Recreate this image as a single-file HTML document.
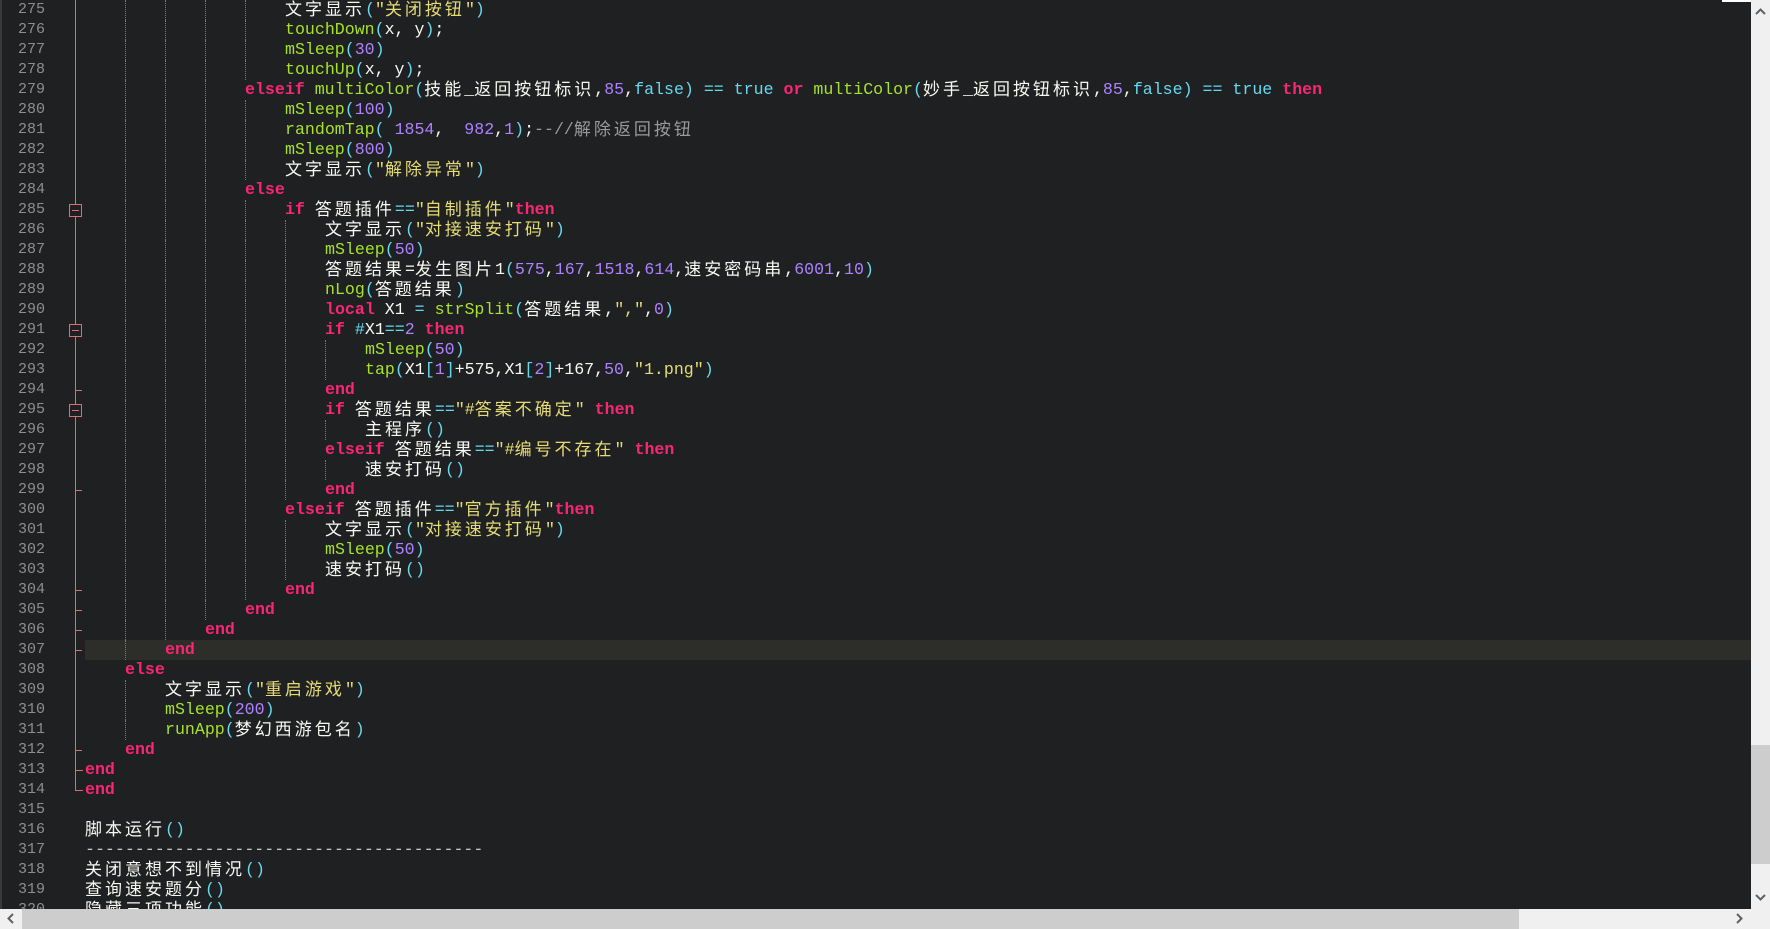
<!DOCTYPE html>
<html><head><meta charset="utf-8"><style>
*{margin:0;padding:0;box-sizing:border-box}
body{width:1770px;height:929px;overflow:hidden;background:#1f2022;position:relative;font-family:"Liberation Mono",monospace;}
#ed{position:absolute;left:0;top:0;width:1751px;height:909px;overflow:hidden;background:#1f2022;border-left:2px solid #3a3a3a}
.ln{position:absolute;left:0;width:43px;text-align:right;color:#8e8e8e;font-size:15px;line-height:20px;height:20px}
.l{position:absolute;left:83px;height:20px;line-height:20px;font-size:16.6px;color:#f8f8f2;white-space:pre;overflow:visible}
.l span{vertical-align:top;line-height:20px}
.i{display:inline-block;width:40px;height:20px;vertical-align:top}
.g{border-left:1px dotted #7a7a7a}
.l .c{font-family:"Noto Sans CJK SC",sans-serif;font-size:17px;letter-spacing:3px;display:inline-block;height:20px;line-height:20px;vertical-align:top;position:relative;top:-2px}
.l .s .c{top:-2px}
.k{color:#f92672;font-weight:bold}
.f{color:#a6e22e}
.n{color:#ae81ff}
.s{color:#e6db74}
.p{color:#66d9ef}
.m{color:#9a9a9a}
.d{color:#c8c8c8}
#hl{position:absolute;left:83px;top:640px;width:1668px;height:20px;background:#2d2e29}
.fl{position:absolute;background:#d87070}
.box{position:absolute;left:67px;width:13px;height:13px;border:1px solid #d87070;background:#1f2022}
.box:after{content:"";position:absolute;left:2px;right:2px;top:5px;height:1px;background:#d87070}
</style></head><body>
<div id="ed">
<div id="hl"></div>
<div class="fl" style="left:73px;top:0;width:1px;height:791px"></div>
<div class="fl" style="left:73px;top:790px;width:8px;height:1px"></div>
<div class="fl" style="left:73px;top:770px;width:8px;height:1px"></div>
<div class="fl" style="left:73px;top:390px;width:7px;height:1px"></div>
<div class="fl" style="left:73px;top:490px;width:7px;height:1px"></div>
<div class="fl" style="left:73px;top:590px;width:7px;height:1px"></div>
<div class="fl" style="left:73px;top:610px;width:7px;height:1px"></div>
<div class="fl" style="left:73px;top:630px;width:7px;height:1px"></div>
<div class="fl" style="left:73px;top:650px;width:7px;height:1px"></div>
<div class="fl" style="left:73px;top:750px;width:7px;height:1px"></div>
<div class="box" style="top:204px"></div>
<div class="box" style="top:324px"></div>
<div class="box" style="top:404px"></div>

<div class="ln" style="top:0">275</div><div class="ln" style="top:20px">276</div><div class="ln" style="top:40px">277</div><div class="ln" style="top:60px">278</div><div class="ln" style="top:80px">279</div><div class="ln" style="top:100px">280</div><div class="ln" style="top:120px">281</div><div class="ln" style="top:140px">282</div><div class="ln" style="top:160px">283</div><div class="ln" style="top:180px">284</div><div class="ln" style="top:200px">285</div><div class="ln" style="top:220px">286</div><div class="ln" style="top:240px">287</div><div class="ln" style="top:260px">288</div><div class="ln" style="top:280px">289</div><div class="ln" style="top:300px">290</div><div class="ln" style="top:320px">291</div><div class="ln" style="top:340px">292</div><div class="ln" style="top:360px">293</div><div class="ln" style="top:380px">294</div><div class="ln" style="top:400px">295</div><div class="ln" style="top:420px">296</div><div class="ln" style="top:440px">297</div><div class="ln" style="top:460px">298</div><div class="ln" style="top:480px">299</div><div class="ln" style="top:500px">300</div><div class="ln" style="top:520px">301</div><div class="ln" style="top:540px">302</div><div class="ln" style="top:560px">303</div><div class="ln" style="top:580px">304</div><div class="ln" style="top:600px">305</div><div class="ln" style="top:620px">306</div><div class="ln" style="top:640px">307</div><div class="ln" style="top:660px">308</div><div class="ln" style="top:680px">309</div><div class="ln" style="top:700px">310</div><div class="ln" style="top:720px">311</div><div class="ln" style="top:740px">312</div><div class="ln" style="top:760px">313</div><div class="ln" style="top:780px">314</div><div class="ln" style="top:800px">315</div><div class="ln" style="top:820px">316</div><div class="ln" style="top:840px">317</div><div class="ln" style="top:860px">318</div><div class="ln" style="top:880px">319</div><div class="ln" style="top:900px">320</div>

<div class="l" style="top:0"><span class="i"></span><span class="i g"></span><span class="i g"></span><span class="i g"></span><span class="i g"></span><span class="c">文字显示</span><span class="p">(</span><span class="s">"<span class="c">关闭按钮</span>"</span><span class="p">)</span></div>
<div class="l" style="top:20px"><span class="i"></span><span class="i g"></span><span class="i g"></span><span class="i g"></span><span class="i g"></span><span class="f">touchDown</span><span class="p">(</span>x, y<span class="p">)</span>;</div>
<div class="l" style="top:40px"><span class="i"></span><span class="i g"></span><span class="i g"></span><span class="i g"></span><span class="i g"></span><span class="f">mSleep</span><span class="p">(</span><span class="n">30</span><span class="p">)</span></div>
<div class="l" style="top:60px"><span class="i"></span><span class="i g"></span><span class="i g"></span><span class="i g"></span><span class="i g"></span><span class="f">touchUp</span><span class="p">(</span>x, y<span class="p">)</span>;</div>
<div class="l" style="top:80px"><span class="i"></span><span class="i g"></span><span class="i g"></span><span class="i g"></span><span class="k">elseif</span> <span class="f">multiColor</span><span class="p">(</span><span class="c">技能</span>_<span class="c">返回按钮标识</span>,<span class="n">85</span>,<span class="p">false)</span> <span class="p">==</span> <span class="p">true</span> <span class="k">or</span> <span class="f">multiColor</span><span class="p">(</span><span class="c">妙手</span>_<span class="c">返回按钮标识</span>,<span class="n">85</span>,<span class="p">false)</span> <span class="p">==</span> <span class="p">true</span> <span class="k">then</span></div>
<div class="l" style="top:100px"><span class="i"></span><span class="i g"></span><span class="i g"></span><span class="i g"></span><span class="i g"></span><span class="f">mSleep</span><span class="p">(</span><span class="n">100</span><span class="p">)</span></div>
<div class="l" style="top:120px"><span class="i"></span><span class="i g"></span><span class="i g"></span><span class="i g"></span><span class="i g"></span><span class="f">randomTap</span><span class="p">(</span> <span class="n">1854</span>,  <span class="n">982</span>,<span class="n">1</span><span class="p">)</span>;<span class="m">--//</span><span class="m c">解除返回按钮</span></div>
<div class="l" style="top:140px"><span class="i"></span><span class="i g"></span><span class="i g"></span><span class="i g"></span><span class="i g"></span><span class="f">mSleep</span><span class="p">(</span><span class="n">800</span><span class="p">)</span></div>
<div class="l" style="top:160px"><span class="i"></span><span class="i g"></span><span class="i g"></span><span class="i g"></span><span class="i g"></span><span class="c">文字显示</span><span class="p">(</span><span class="s">"<span class="c">解除异常</span>"</span><span class="p">)</span></div>
<div class="l" style="top:180px"><span class="i"></span><span class="i g"></span><span class="i g"></span><span class="i g"></span><span class="k">else</span></div>
<div class="l" style="top:200px"><span class="i"></span><span class="i g"></span><span class="i g"></span><span class="i g"></span><span class="i g"></span><span class="k">if</span> <span class="c">答题插件</span><span class="p">==</span><span class="s">"<span class="c">自制插件</span>"</span><span class="k">then</span></div>
<div class="l" style="top:220px"><span class="i"></span><span class="i g"></span><span class="i g"></span><span class="i g"></span><span class="i g"></span><span class="i g"></span><span class="c">文字显示</span><span class="p">(</span><span class="s">"<span class="c">对接速安打码</span>"</span><span class="p">)</span></div>
<div class="l" style="top:240px"><span class="i"></span><span class="i g"></span><span class="i g"></span><span class="i g"></span><span class="i g"></span><span class="i g"></span><span class="f">mSleep</span><span class="p">(</span><span class="n">50</span><span class="p">)</span></div>
<div class="l" style="top:260px"><span class="i"></span><span class="i g"></span><span class="i g"></span><span class="i g"></span><span class="i g"></span><span class="i g"></span><span class="c">答题结果</span>=<span class="c">发生图片</span>1<span class="p">(</span><span class="n">575</span>,<span class="n">167</span>,<span class="n">1518</span>,<span class="n">614</span>,<span class="c">速安密码串</span>,<span class="n">6001</span>,<span class="n">10</span><span class="p">)</span></div>
<div class="l" style="top:280px"><span class="i"></span><span class="i g"></span><span class="i g"></span><span class="i g"></span><span class="i g"></span><span class="i g"></span><span class="f">nLog</span><span class="p">(</span><span class="c">答题结果</span><span class="p">)</span></div>
<div class="l" style="top:300px"><span class="i"></span><span class="i g"></span><span class="i g"></span><span class="i g"></span><span class="i g"></span><span class="i g"></span><span class="k">local</span> X1 <span class="p">=</span> <span class="f">strSplit</span><span class="p">(</span><span class="c">答题结果</span>,<span class="s">","</span>,<span class="n">0</span><span class="p">)</span></div>
<div class="l" style="top:320px"><span class="i"></span><span class="i g"></span><span class="i g"></span><span class="i g"></span><span class="i g"></span><span class="i g"></span><span class="k">if</span> <span class="p">#</span>X1<span class="p">==</span><span class="n">2</span> <span class="k">then</span></div>
<div class="l" style="top:340px"><span class="i"></span><span class="i g"></span><span class="i g"></span><span class="i g"></span><span class="i g"></span><span class="i g"></span><span class="i g"></span><span class="f">mSleep</span><span class="p">(</span><span class="n">50</span><span class="p">)</span></div>
<div class="l" style="top:360px"><span class="i"></span><span class="i g"></span><span class="i g"></span><span class="i g"></span><span class="i g"></span><span class="i g"></span><span class="i g"></span><span class="f">tap</span><span class="p">(</span>X1<span class="p">[</span><span class="n">1</span><span class="p">]</span>+575,X1<span class="p">[</span><span class="n">2</span><span class="p">]</span>+167,<span class="n">50</span>,<span class="s">"1.png"</span><span class="p">)</span></div>
<div class="l" style="top:380px"><span class="i"></span><span class="i g"></span><span class="i g"></span><span class="i g"></span><span class="i g"></span><span class="i g"></span><span class="k">end</span></div>
<div class="l" style="top:400px"><span class="i"></span><span class="i g"></span><span class="i g"></span><span class="i g"></span><span class="i g"></span><span class="i g"></span><span class="k">if</span> <span class="c">答题结果</span><span class="p">==</span><span class="s">"#<span class="c">答案不确定</span>"</span> <span class="k">then</span></div>
<div class="l" style="top:420px"><span class="i"></span><span class="i g"></span><span class="i g"></span><span class="i g"></span><span class="i g"></span><span class="i g"></span><span class="i g"></span><span class="c">主程序</span><span class="p">()</span></div>
<div class="l" style="top:440px"><span class="i"></span><span class="i g"></span><span class="i g"></span><span class="i g"></span><span class="i g"></span><span class="i g"></span><span class="k">elseif</span> <span class="c">答题结果</span><span class="p">==</span><span class="s">"#<span class="c">编号不存在</span>"</span> <span class="k">then</span></div>
<div class="l" style="top:460px"><span class="i"></span><span class="i g"></span><span class="i g"></span><span class="i g"></span><span class="i g"></span><span class="i g"></span><span class="i g"></span><span class="c">速安打码</span><span class="p">()</span></div>
<div class="l" style="top:480px"><span class="i"></span><span class="i g"></span><span class="i g"></span><span class="i g"></span><span class="i g"></span><span class="i g"></span><span class="k">end</span></div>
<div class="l" style="top:500px"><span class="i"></span><span class="i g"></span><span class="i g"></span><span class="i g"></span><span class="i g"></span><span class="k">elseif</span> <span class="c">答题插件</span><span class="p">==</span><span class="s">"<span class="c">官方插件</span>"</span><span class="k">then</span></div>
<div class="l" style="top:520px"><span class="i"></span><span class="i g"></span><span class="i g"></span><span class="i g"></span><span class="i g"></span><span class="i g"></span><span class="c">文字显示</span><span class="p">(</span><span class="s">"<span class="c">对接速安打码</span>"</span><span class="p">)</span></div>
<div class="l" style="top:540px"><span class="i"></span><span class="i g"></span><span class="i g"></span><span class="i g"></span><span class="i g"></span><span class="i g"></span><span class="f">mSleep</span><span class="p">(</span><span class="n">50</span><span class="p">)</span></div>
<div class="l" style="top:560px"><span class="i"></span><span class="i g"></span><span class="i g"></span><span class="i g"></span><span class="i g"></span><span class="i g"></span><span class="c">速安打码</span><span class="p">()</span></div>
<div class="l" style="top:580px"><span class="i"></span><span class="i g"></span><span class="i g"></span><span class="i g"></span><span class="i g"></span><span class="k">end</span></div>
<div class="l" style="top:600px"><span class="i"></span><span class="i g"></span><span class="i g"></span><span class="i g"></span><span class="k">end</span></div>
<div class="l" style="top:620px"><span class="i"></span><span class="i g"></span><span class="i g"></span><span class="k">end</span></div>
<div class="l" style="top:640px"><span class="i"></span><span class="i g"></span><span class="k">end</span></div>
<div class="l" style="top:660px"><span class="i"></span><span class="k">else</span></div>
<div class="l" style="top:680px"><span class="i"></span><span class="i g"></span><span class="c">文字显示</span><span class="p">(</span><span class="s">"<span class="c">重启游戏</span>"</span><span class="p">)</span></div>
<div class="l" style="top:700px"><span class="i"></span><span class="i g"></span><span class="f">mSleep</span><span class="p">(</span><span class="n">200</span><span class="p">)</span></div>
<div class="l" style="top:720px"><span class="i"></span><span class="i g"></span><span class="f">runApp</span><span class="p">(</span><span class="c">梦幻西游包名</span><span class="p">)</span></div>
<div class="l" style="top:740px"><span class="i"></span><span class="k">end</span></div>
<div class="l" style="top:760px"><span class="k">end</span></div>
<div class="l" style="top:780px"><span class="k">end</span></div>
<div class="l" style="top:820px"><span class="c">脚本运行</span><span class="p">()</span></div>
<div class="l" style="top:840px"><span class="d">----------------------------------------</span></div>
<div class="l" style="top:860px"><span class="c">关闭意想不到情况</span><span class="p">()</span></div>
<div class="l" style="top:880px"><span class="c">查询速安题分</span><span class="p">()</span></div>
<div class="l" style="top:900px"><span class="c">隐藏三项功能</span><span class="p">()</span></div>
</div>

<div style="position:absolute;left:1722px;top:0;width:30px;height:2px;background:#fff"></div>
<div style="position:absolute;left:1751px;top:0;width:19px;height:909px;background:#f0f0f0"></div>
<div style="position:absolute;left:1751px;top:745px;width:19px;height:119px;background:#cdcdcd"></div>
<svg style="position:absolute;left:1751px;top:0" width="19" height="909"><path d="M5 14 L9.5 9.5 L14 14" stroke="#606060" stroke-width="2" fill="none"/><path d="M5 895 L9.5 899.5 L14 895" stroke="#606060" stroke-width="2" fill="none"/></svg>
<div style="position:absolute;left:0;top:909px;width:1770px;height:20px;background:#f0f0f0"></div>
<div style="position:absolute;left:22px;top:909px;width:1497px;height:20px;background:#cdcdcd"></div>
<svg style="position:absolute;left:0;top:909px" width="1770" height="20"><path d="M13 5 L8.5 9.5 L13 14" stroke="#606060" stroke-width="2" fill="none"/><path d="M1737 5 L1741.5 9.5 L1737 14" stroke="#606060" stroke-width="2" fill="none"/></svg>
</body></html>
